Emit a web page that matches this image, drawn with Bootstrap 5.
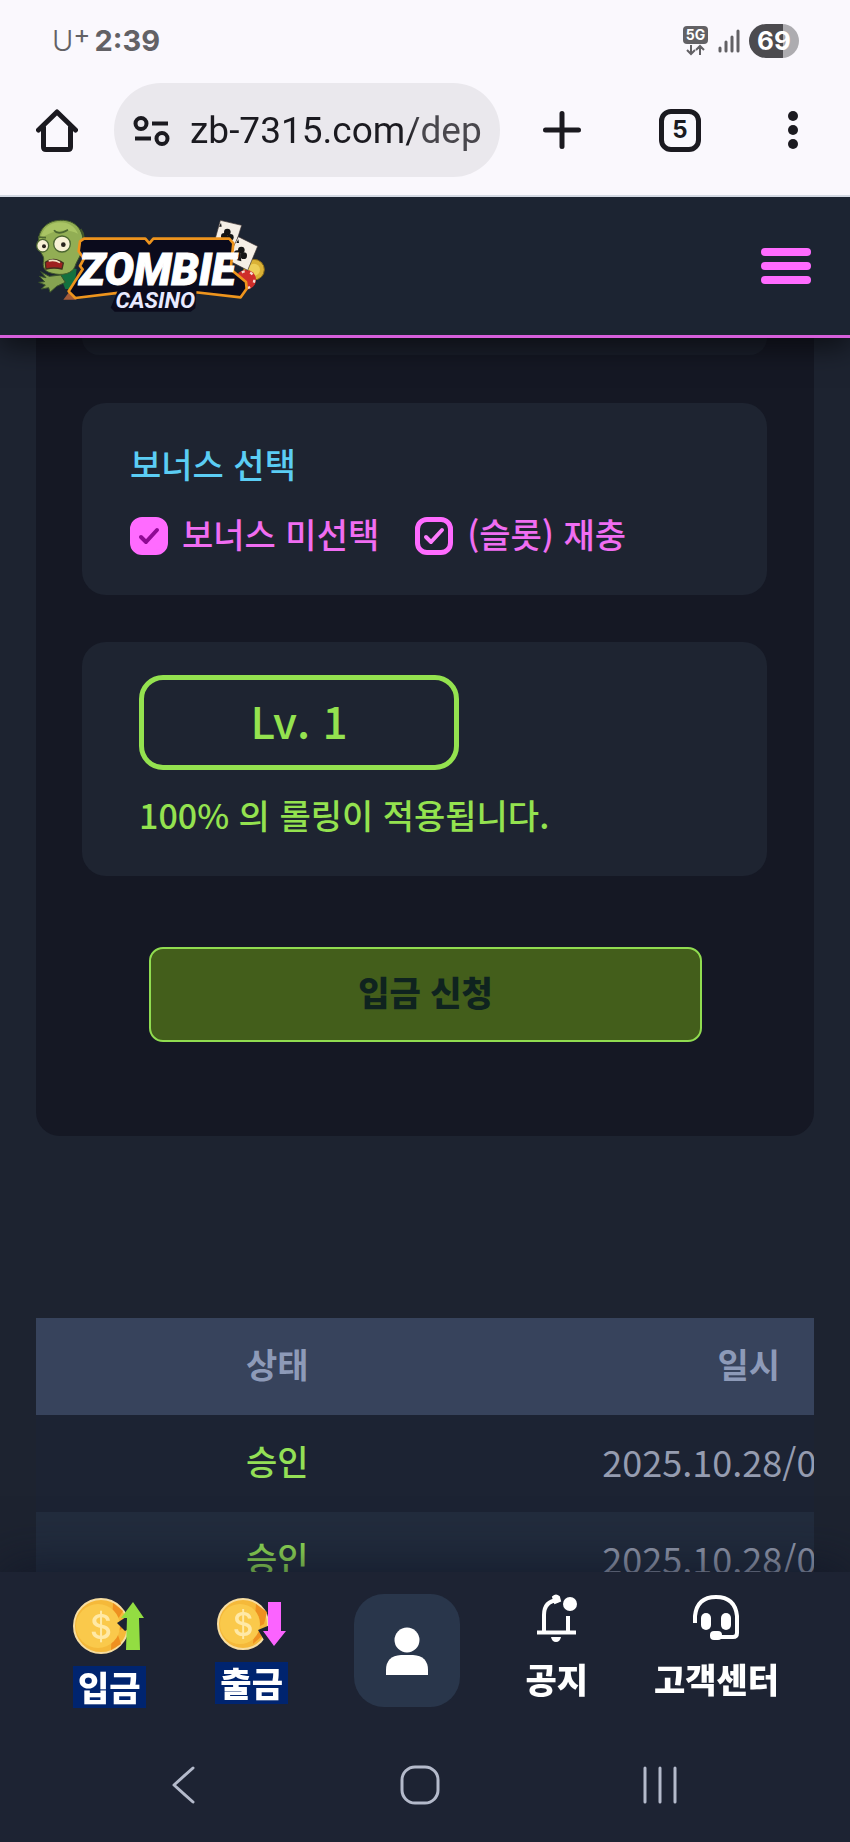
<!DOCTYPE html>
<html lang="ko">
<head>
<meta charset="utf-8">
<meta name="viewport" content="width=device-width, initial-scale=1">
<title>Zombie Casino</title>
<link href="https://cdn.jsdelivr.net/npm/bootstrap@5.3.0/dist/css/bootstrap.min.css" rel="stylesheet">
<style>
  body { background: #1d2330; font-family: "Noto Sans CJK KR", sans-serif; font-size: 34px; font-weight: 500; line-height: 48px; color: #fff; overflow-x: hidden; }
  button { background: none; border: 0; padding: 0; line-height: 1; flex: none; }
  svg { display: block; flex: none; }

  /* phone status bar and browser toolbar */
  .browser { background: #faf8fd; border-bottom: 2px solid #d3d9e3; color: #1b1a20; padding-bottom: 18px; font-family: Inter, sans-serif; z-index: 6; }
  .status { height: 83px; padding: 0 51px 2px 52px; color: #626165; font-size: 29px; font-weight: 700; }
  .carrier { font-weight: 300; }
  .carrier sup { font-size: 26px; font-weight: 400; top: -8px; line-height: 0; }
  .battery { width: 50px; height: 34px; border-radius: 17px; background: linear-gradient(90deg, #4c4b4f 68%, #adacb0 68%); color: #fff; font-size: 26px; line-height: 34px; }
  .toolbar { padding: 0 52px 0 36px; }
  .address { height: 94px; border-radius: 47px; background: #eae8ed; margin: 0 43px 0 36px; padding: 2px 16px 0 19px; min-width: 0; }
  .address input { border: 0; background: none; outline: 0; width: 100%; min-width: 0; padding: 0; color: #1b1a20; font-family: Roboto, sans-serif; font-weight: 400; font-size: 37px; -webkit-mask-image: linear-gradient(90deg, #000 74%, rgba(0,0,0,.78) 78%); }
  .tabs { width: 42px; height: 43px; border: 5px solid #1b1a20; border-radius: 12px; font-size: 24px; font-weight: 700; margin: 0 87px 0 78px; color: #1b1a20; }

  .site-head { background: #1c2432; height: 141px; border-bottom: 3px solid #d65fdb; box-shadow: 0 8px 28px rgba(0,0,0,.6); padding: 0 39px 0 20px; z-index: 5; }
  .menu-btn { width: 50px; gap: 6px; }
  .menu-btn span { display: block; height: 8px; border-radius: 4px; background: #ff6bff; }

  .panel { background: #151824; margin: 0 36px; padding: 0 47px 94px 46px; border-radius: 0 0 24px 24px; }
  .box { background: #1e2431; border-radius: 24px; }
  .box-stub { height: 17px; border-radius: 0 0 24px 24px; margin-bottom: 48px; background: #1a1f2b; }
  .bonus { padding: 37px 48px 35px; margin-bottom: 47px; }
  .bonus legend { color: #5bcdf4; font-size: 34px; line-height: 48px; margin-bottom: 24px; }
  .choices { gap: 36px; color: #f06df2; }
  .choices label { padding-bottom: 4px; line-height: 44px; }
  .choices .form-check-input { width: 38px; height: 38px; margin: 0 14px 0 0; border: 5px solid #ff6bff; border-radius: 12px; background-color: transparent; background-size: 28px; background-position: center; background-image: url("data:image/svg+xml,%3csvg xmlns='http://www.w3.org/2000/svg' viewBox='0 0 28 28'%3e%3cpath fill='none' stroke='%23ff7dff' stroke-width='4' stroke-linecap='round' stroke-linejoin='round' d='M6 15l5 5 11-12'/%3e%3c/svg%3e"); }
  .choices .form-check-input:checked { background-color: #ff6bff; background-image: url("data:image/svg+xml,%3csvg xmlns='http://www.w3.org/2000/svg' viewBox='0 0 28 28'%3e%3cpath fill='none' stroke='%238f0a94' stroke-width='4' stroke-linecap='round' stroke-linejoin='round' d='M6 15l5 5 11-12'/%3e%3c/svg%3e"); }
  .level { padding: 33px 57px 37px; color: #94e24f; margin-bottom: 71px; }
  .level-tag { width: 320px; max-width: 100%; height: 95px; border: 5px solid #94e24f; border-radius: 24px; font-size: 44px; margin-bottom: 21px; padding-bottom: 6px; }
  .submit-row { padding: 0 65px 0 67px; }
  .submit-row button { height: 95px; border: 2px solid #90dc50; border-radius: 14px; background: #435e1b; color: #0f231f; font-weight: 900; font-size: 34px; padding-bottom: 5px; }

  .history { margin: 182px 36px 0; overflow: hidden; }
  .history table { table-layout: fixed; width: 100%; color: #959cb0; }
  .history th, .history td { height: 97px; padding: 0 0 6px; white-space: nowrap; vertical-align: middle; overflow: hidden; }
  .history th:first-child { width: 62%; }
  .history thead { background: #37435c; color: #8d9ab8; font-weight: 900; }
  .history thead th:last-child { padding-right: 34px; }
  .history tbody { background: #1c2333; }
  .history tbody tr:last-child { background: #222c3d; }
  .history .when { padding-left: 84px; font-size: 36px; font-weight: 400; }
  .ok { color: #94e056; }

  .dock { background: #1d2333; box-shadow: 0 -4px 48px rgba(13,19,36,.7); }
  .dock-items { height: 170px; padding: 22px 71px 0 73px; }
  .dock-items a { color: #fff; text-decoration: none; font-weight: 900; line-height: 42px; }
  .dock-items .coin { padding-top: 4px; gap: 12px; }
  .coin span { background: #00246f; padding: 0 5px; }
  .dock-items .tool { gap: 16px; }
  .me-tile { width: 106px; height: 113px; border-radius: 30px; background: #29364b; }
  .system { padding: 0 173px 14px 171px; height: 100px; }
</style>
</head>
<body>
<header class="browser position-relative">
  <div class="status d-flex align-items-center justify-content-between">
    <div class="d-flex align-items-center gap-1"><span class="carrier">U<sup>+</sup></span><span>2:39</span></div>
    <div class="d-flex align-items-center">
      <svg width="26" height="32" viewBox="0 0 26 32" aria-label="5G">
        <rect width="25" height="18" y="1" rx="4" fill="#626165"/>
        <text x="12.500" y="15" text-anchor="middle" font-size="14" font-weight="700" fill="#fff">5G</text>
        <path d="M8 20v9M4 25l4 4 4-4M17 30v-9M13 25l4-4 4 4" fill="none" stroke="#626165" stroke-width="2"/>
      </svg>
      <svg class="ms-2" width="24" height="24" viewBox="0 0 24 24" stroke="#626165" stroke-width="3" stroke-linecap="round"><path d="M3 19v3M9 13v9M15 8v14M21 2v20"/></svg>
      <div class="battery text-center ms-2">69</div>
    </div>
  </div>
  <div class="toolbar d-flex align-items-center">
    <button aria-label="홈"><svg width="42" height="43" viewBox="0 0 42 43" fill="none" stroke="#1b1a20" stroke-width="5" stroke-linecap="round" stroke-linejoin="round"><path d="M2.500 21L21 3l18.500 18M7.500 18v20q0 2.500 2.500 2.500h22q2.500 0 2.500-2.500V18"/></svg></button>
    <div class="address d-flex align-items-center flex-fill">
      <svg class="me-3" width="37" height="30" viewBox="0 0 37 30" fill="none" stroke="#1b1a20" stroke-width="4"><circle cx="8" cy="7.500" r="5.500"/><path d="M19 7.500h16M2 22.500h16"/><circle cx="29" cy="22.500" r="5.500"/></svg>
      <input class="ms-1" type="text" value="zb-7315.com/dep" aria-label="주소">
    </div>
    <button aria-label="새 탭"><svg width="38" height="38" viewBox="0 0 38 38" stroke="#1b1a20" stroke-width="5" stroke-linecap="round"><path d="M19 2.500v33M2.500 19h33"/></svg></button>
    <button class="tabs">5</button>
    <button aria-label="더보기"><svg width="10" height="40" viewBox="0 0 10 40" fill="#1b1a20"><circle cx="5" cy="6" r="5"/><circle cx="5" cy="20" r="5"/><circle cx="5" cy="34" r="5"/></svg></button>
  </div>
</header>

<div class="site-head d-flex align-items-center justify-content-between position-relative">
  <a href="#" aria-label="Zombie Casino">
    <svg width="260" height="130" viewBox="0 0 780 390">
      <!-- chips and cards -->
      <circle cx="702" cy="206" r="31" fill="#d9b136" stroke="#8c6a14" stroke-width="3"/>
      <circle cx="702" cy="206" r="18" fill="#edcf58"/>
      <circle cx="678" cy="236" r="30" fill="#cf2d2a"/>
      <circle cx="678" cy="236" r="25" fill="none" stroke="#f5dcd2" stroke-width="7" stroke-dasharray="9 17"/>
      <g stroke="#3a3030" stroke-width="2" fill="#f5efe6">
        <path d="M601 58l64 15-24 76-60-19z"/>
        <path d="M655 107l58 29-30 72-62-32z"/>
      </g>
      <g fill="#151515">
        <circle cx="622" cy="93" r="10"/><circle cx="613" cy="106" r="10"/><circle cx="631" cy="109" r="10"/><path d="M620 100l-6 25 14 2z"/>
        <circle cx="664" cy="147" r="10"/><circle cx="652" cy="158" r="10"/><circle cx="671" cy="164" r="10"/><path d="M661 155l-11 22 14 4z"/>
        <path d="M603 65l-6 12h8zM655 115l-6 11h8z"/>
      </g>
      <!-- zombie -->
      <path d="M118 222l30-22 22 4-8 60-26 0z" fill="#13713f"/>
      <path d="M62 212l26 14 34-4 14 22-26 12-20 18-4-14-22 4 12-12-20-8 18-2-16-16 20 4z" fill="#86a351" stroke="#39532a" stroke-width="3"/>
      <path d="M130 296l18-24 22 24z" fill="#a35a39"/>
      <path d="M122 58c44-2 72 30 67 76-3 28-18 42-24 62-8 22-38 30-72 20-22-6-26-20-22-38 2-12-6-16-10-28C42 96 76 58 122 58z" fill="#92ae54" stroke="#41592a" stroke-width="3"/>
      <path d="M122 64c-34 0-58 22-60 50 30-26 76-34 112-16-10-22-28-34-52-34z" fill="#a9c464"/>
      <ellipse cx="68" cy="134" rx="18" ry="19" fill="#f8f1d5" stroke="#4c6631" stroke-width="4"/>
      <ellipse cx="126" cy="129" rx="25" ry="24" fill="#f8f1d5" stroke="#4c6631" stroke-width="4"/>
      <circle cx="72" cy="136" r="6" fill="#28231c"/><circle cx="130" cy="131" r="7" fill="#28231c"/>
      <path d="M54 108l24 2M102 88q12 16 42-2" stroke="#4c6631" stroke-width="5" fill="none"/>
      <path d="M76 184q24-18 54 2l-4 18q-24-6-48 0z" fill="#9e2120" stroke="#42301d" stroke-width="4"/>
      <path d="M86 180q18-5 34 5" stroke="#f2e5c7" stroke-width="5" fill="none"/>
      <path d="M182 84q18 24 2 54" stroke="#41592a" stroke-width="5" fill="none"/>
      <!-- name plate -->
      <path d="M192 113h184l12 14 12-14h228l12 14-8 78 46 38 2 20-18 26-142-16-220 2-134 16-20-20 42-66-8-10 12-22-16-22 4-30z" fill="#0b0b1c" stroke="#ee941d" stroke-width="8" stroke-linejoin="round"/>
      <path d="M296 262h234l-4 60-14 10H284l-12-12z" fill="#0b0b1c"/>
      <text x="412" y="252" text-anchor="middle" font-family="Roboto, sans-serif" font-size="132" font-weight="900" font-style="italic" fill="#fff" stroke="#fff" stroke-width="3">ZOMBIE</text>
      <text x="406" y="320" text-anchor="middle" font-family="Roboto, sans-serif" font-size="68" font-weight="700" font-style="italic" fill="#e8eaff">CASINO</text>
    </svg>
  </a>
  <button class="menu-btn d-grid" aria-label="메뉴"><span></span><span></span><span></span></button>
</div>

<main>
  <form class="panel">
    <div class="box box-stub"></div>
    <fieldset class="box bonus">
      <legend>보너스 선택</legend>
      <div class="choices d-flex flex-wrap">
        <div class="d-flex align-items-center"><input class="form-check-input" type="checkbox" id="bonusNone" checked><label for="bonusNone">보너스 미선택</label></div>
        <div class="d-flex align-items-center"><input class="form-check-input" type="checkbox" id="bonusSlot"><label for="bonusSlot">(슬롯) 재충</label></div>
      </div>
    </fieldset>
    <div class="box level">
      <div class="level-tag d-flex align-items-center justify-content-center">Lv. 1</div>
      <p class="mb-0">100% 의 롤링이 적용됩니다.</p>
    </div>
    <div class="submit-row"><button type="button" class="w-100">입금 신청</button></div>
  </form>

  <div class="history">
    <table>
      <thead><tr><th class="text-center">상태</th><th class="text-end">일시</th></tr></thead>
      <tbody>
        <tr><td class="text-center ok">승인</td><td class="when">2025.10.28/0</td></tr>
        <tr><td class="text-center ok">승인</td><td class="when">2025.10.28/0</td></tr>
      </tbody>
    </table>
  </div>
</main>

<footer class="dock fixed-bottom">
  <nav class="dock-items d-flex justify-content-between align-items-start">
    <a href="#" class="coin me-1 d-flex flex-column align-items-center">
      <svg width="72" height="56" viewBox="0 0 72 56">
        <circle cx="28" cy="28" r="27" fill="#f5b93a" stroke="#f7dda0" stroke-width="2"/>
        <path d="M40 5l10 8-7 11 7 6-6 4 4 12-10 6z" fill="#ee9020"/>
        <circle cx="25" cy="28" r="22" fill="#fac94b"/>
        <path d="M56 17l-12 8 8 8 4-2z" fill="#1d2333"/>
        <text x="28" y="41" text-anchor="middle" font-family="Inter, sans-serif" font-size="34" font-weight="500" fill="#ffe9a6">$</text>
        <path d="M60 4l11 16h-5l1 32H53l1-32h-6z" fill="#93dd42"/>
      </svg>
      <span>입금</span>
    </a>
    <a href="#" class="coin d-flex flex-column align-items-center">
      <svg width="72" height="52" viewBox="0 0 72 52">
        <circle cx="27" cy="26" r="25" fill="#f5b93a" stroke="#f7dda0" stroke-width="2"/>
        <path d="M40 6l11 8-3 12-8 4 6 8-9 8z" fill="#ee9020"/>
        <circle cx="24" cy="26" r="20" fill="#fac94b"/>
        <path d="M54 27l-12 5 6 10 8-4z" fill="#1d2333"/>
        <text x="27" y="38" text-anchor="middle" font-family="Inter, sans-serif" font-size="32" font-weight="500" fill="#ffe9a6">$</text>
        <path d="M52 4h13v29h5L58 48 47 33h5z" fill="#fb63ff"/>
      </svg>
      <span>출금</span>
    </a>
    <a href="#" class="me-tile d-flex align-items-center justify-content-center" aria-label="내 정보">
      <svg width="44" height="50" viewBox="0 0 44 50" fill="#fff"><circle cx="22" cy="14" r="12.500"/><path d="M1 49V44q0-14 15-15h12q15 1 15 15v5z"/></svg>
    </a>
    <a href="#" class="tool d-flex flex-column align-items-center">
      <svg width="42" height="48" viewBox="0 0 42 48" fill="none" stroke="#fff" stroke-width="4"><path d="M22 6Q8 7 8 21v17M32 38V22M1 38.500h39"/><path d="M17 3q3-3 6 0l1 4-5 2z" fill="#fff" stroke-width="2"/><circle cx="34" cy="10" r="7" fill="#fff" stroke="none"/><path d="M15 43h10q-1 5-5 5t-5-5z" fill="#fff" stroke="none"/></svg>
      <span>공지</span>
    </a>
    <a href="#" class="tool d-flex flex-column align-items-center">
      <svg width="46" height="48" viewBox="0 0 46 48" fill="none" stroke="#fff" stroke-width="4"><path d="M2 29V22Q4 3 23 3t21 19v17q0 4-4 4H22"/><g fill="#fff" stroke="none"><rect x="8" y="19" width="10" height="17" rx="5"/><rect x="28" y="19" width="10" height="17" rx="5"/><rect x="17" y="37" width="12" height="9" rx="4"/></g></svg>
      <span>고객센터</span>
    </a>
  </nav>
  <div class="system d-flex justify-content-between align-items-center">
    <button aria-label="뒤로"><svg width="25" height="40" viewBox="0 0 25 40" fill="none" stroke="#b4bacb" stroke-width="3" stroke-linecap="round" stroke-linejoin="round"><path d="M22 3L3 20l19 17"/></svg></button>
    <button aria-label="홈 화면"><svg width="40" height="40" viewBox="0 0 40 40" fill="none" stroke="#b4bacb" stroke-width="3"><rect x="2" y="2" width="36" height="36" rx="13"/></svg></button>
    <button aria-label="최근 앱"><svg width="34" height="38" viewBox="0 0 34 38" stroke="#b4bacb" stroke-width="3" stroke-linecap="round"><path d="M2 2v34M17 2v34M32 2v34"/></svg></button>
  </div>
</footer>
<script src="https://cdn.jsdelivr.net/npm/bootstrap@5.3.0/dist/js/bootstrap.bundle.min.js"></script>
</body>
</html>
